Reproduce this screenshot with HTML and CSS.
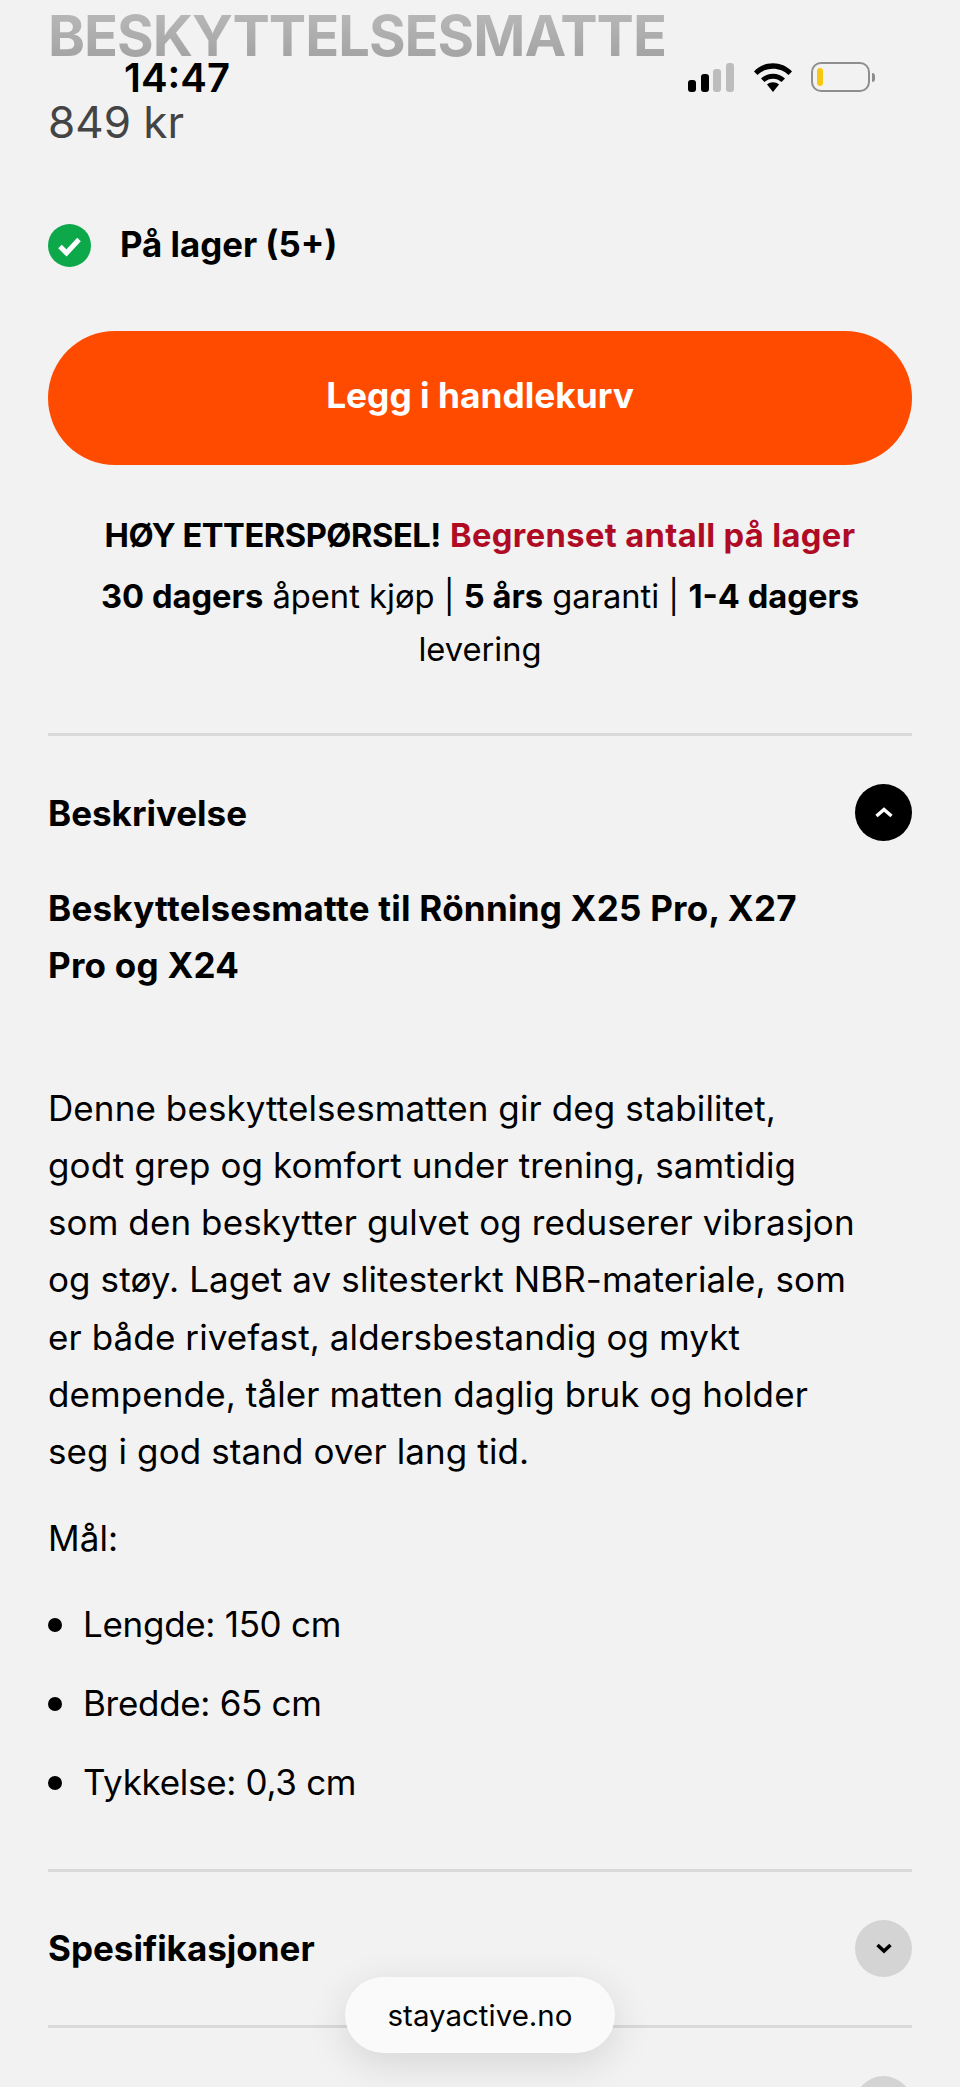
FILE: index.html
```html
<!DOCTYPE html>
<html lang="nb">
  <head>
    <meta charset="UTF-8" />
    <meta name="viewport" content="width=device-width, initial-scale=1.0" />
    <title>Beskyttelsesmatte</title>
    <link rel="stylesheet" href="styles.css">
  </head>
  <body>
    <div class="status-bar">
      <span class="time">14:47</span>
      <div class="status-icons">
        <svg class="signal" width="46" height="29" viewBox="0 0 46 29">
          <rect x="0" y="17" width="8" height="12" rx="3" fill="#000"/>
          <rect x="13" y="11" width="8" height="18" rx="3" fill="#000"/>
          <rect x="25" y="6" width="8" height="23" rx="3" fill="#bdbdbd"/>
          <rect x="38" y="0" width="8" height="29" rx="3" fill="#bdbdbd"/>
        </svg>
        <svg class="wifi" width="40" height="30" viewBox="0 0 40 30">
          <path d="M1 9.500C11 -1.500 29 -1.500 39 9.500L35.500 13C27.500 4.500 12.500 4.500 4.500 13Z" fill="#000"/>
          <path d="M8 16.500C14.500 10 25.500 10 32 16.500L28.500 20C24 15.500 16 15.500 11.500 20Z" fill="#000"/>
          <path d="M14 22.500C17.500 19.500 22.500 19.500 26 22.500L20 30Z" fill="#000"/>
        </svg>
        <div class="battery">
          <div class="battery-body"><div class="battery-level"></div></div>
          <div class="battery-nub"></div>
        </div>
      </div>
    </div>

    <main class="product">
      <h1 class="title">BESKYTTELSESMATTE</h1>
      <div class="price">849 kr</div>

      <div class="stock">
        <svg width="43" height="43" viewBox="0 0 43 43">
          <circle cx="21.500" cy="21.500" r="21.500" fill="#0ca84a"/>
          <path d="M12 22.500L18.500 29L31 15.500" fill="none" stroke="#fff" stroke-width="5"/>
        </svg>
        <span>På lager (5+)</span>
      </div>

      <button class="add-to-cart">Legg i handlekurv</button>

      <div class="info">
        <p class="demand"><b class="high">HØY ETTERSPØRSEL!</b> <b class="limited">Begrenset antall på lager</b></p>
        <p class="terms"><b>30 dagers</b> åpent kjøp | <b>5 års</b> garanti | <b>1-4 dagers</b> levering</p>
      </div>

      <section class="accordion open">
        <div class="accordion-head">
          <h2>Beskrivelse</h2>
          <span class="toggle dark">
            <svg width="18" height="11" viewBox="0 0 18 11"><path d="M1.500 9L9 2.500L16.500 9" fill="none" stroke="#fff" stroke-width="3.500"/></svg>
          </span>
        </div>
        <div class="accordion-body">
          <h3>Beskyttelsesmatte til Rönning X25 Pro, X27<br>Pro og X24</h3>
          <p class="text">Denne beskyttelsesmatten gir deg stabilitet,<br>godt grep og komfort under trening, samtidig<br>som den beskytter gulvet og reduserer vibrasjon<br>og støy. Laget av slitesterkt NBR-materiale, som<br>er både rivefast, aldersbestandig og mykt<br>dempende, tåler matten daglig bruk og holder<br>seg i god stand over lang tid.</p>
          <p class="measure">Mål:</p>
          <ul>
            <li>Lengde: 150 cm</li>
            <li>Bredde: 65 cm</li>
            <li>Tykkelse: 0,3 cm</li>
          </ul>
        </div>
      </section>

      <section class="accordion">
        <div class="accordion-head">
          <h2>Spesifikasjoner</h2>
          <span class="toggle">
            <svg width="18" height="11" viewBox="0 0 18 11"><path d="M2.500 2L9 8L15.500 2" fill="none" stroke="#000" stroke-width="3.500"/></svg>
          </span>
        </div>
      </section>

      <section class="accordion">
        <div class="accordion-head">
          <h2></h2>
          <span class="toggle"></span>
        </div>
      </section>
    </main>

    <div class="url-pill">stayactive.no</div>
  </body>
</html>
```

FILE: styles.css
```css
html,
body {
  margin: 0;
  height: 2087px;
  overflow: hidden;
}

body {
  position: relative;
  background: #f2f2f2;
  color: #000;
  font-family: Inter, "Liberation Sans", sans-serif;
}

p,
h1,
h2,
h3,
ul {
  margin: 0;
  padding: 0;
}

.status-bar {
  position: absolute;
  top: 0;
  left: 0;
  width: 960px;
  height: 100px;
}

.time {
  position: absolute;
  left: 124px;
  top: 56px;
  font-size: 40px;
  line-height: 44px;
  font-weight: 600;
}

.status-icons {
  position: absolute;
  left: 688px;
  top: 62px;
  display: flex;
  align-items: flex-start;
}

.signal {
  margin-top: 1px;
}

.wifi {
  margin-left: 19px;
}

.battery {
  margin-left: 18px;
  display: flex;
  align-items: center;
}

.battery-body {
  box-sizing: border-box;
  width: 59px;
  height: 30px;
  border: 2.500px solid #8e8e8e;
  border-radius: 10px;
  padding: 3.500px;
}

.battery-level {
  width: 6px;
  height: 18px;
  background: #f8c811;
  border-radius: 3px;
}

.battery-nub {
  width: 3px;
  height: 9px;
  margin-left: 2px;
  background: #8e8e8e;
  border-radius: 0 3px 3px 0;
}

.product {
  padding: 0 48px;
}

.title {
  padding-top: 6px;
  font-size: 56px;
  line-height: 60px;
  font-weight: 700;
  letter-spacing: -1px;
  background: linear-gradient(#bdbdbd, #a0a0a0);
  -webkit-background-clip: text;
  background-clip: text;
  color: transparent;
}

.price {
  margin-top: 30px;
  font-size: 44px;
  line-height: 52px;
  color: #444;
}

.stock {
  height: 43px;
  margin-top: 76px;
  display: flex;
  align-items: center;
  gap: 29px;
  font-size: 34.800px;
  font-weight: 700;
}

.stock span {
  margin-top: -3px;
}

.add-to-cart {
  display: block;
  width: 100%;
  height: 134px;
  margin-top: 64px;
  padding: 0 0 6px;
  border: none;
  border-radius: 67px;
  background: #ff4b00;
  color: #fff;
  font-family: inherit;
  font-size: 35.300px;
  font-weight: 700;
}

.info {
  margin-top: 43px;
  text-align: center;
  font-size: 32.700px;
}

.info b {
  font-weight: 700;
}

.demand {
  line-height: 54px;
}

.high {
  letter-spacing: -0.500px;
}

.limited {
  color: #b00b24;
  letter-spacing: 0.360px;
}

.terms {
  margin-top: 8px;
  line-height: 53px;
}

.accordion {
  border-top: 3px solid #d9d9d9;
}

.info + .accordion {
  margin-top: 57px;
}

.accordion-head {
  display: flex;
  justify-content: space-between;
  align-items: center;
  padding: 48px 0;
}

.accordion-head h2 {
  font-size: 35px;
  font-weight: 700;
}

.toggle {
  display: flex;
  justify-content: center;
  align-items: center;
  width: 57px;
  height: 57px;
  border-radius: 50%;
  background: #d4d4d4;
}

.toggle.dark {
  background: #000;
}

.accordion-body {
  margin-top: -9px;
  padding-bottom: 36px;
  font-size: 35px;
  letter-spacing: 0.100px;
  line-height: 57.300px;
}

.accordion-body h3 {
  font-size: 35px;
  font-weight: 700;
  letter-spacing: 0.250px;
}

.text {
  margin-top: 85px;
}

.measure {
  margin-top: 29px;
}

.accordion-body ul {
  margin-top: 29px;
  list-style: none;
  letter-spacing: -0.300px;
}

.accordion-body li {
  display: flex;
  align-items: center;
  gap: 21px;
  margin-bottom: 21.700px;
}

.accordion-body li::before {
  content: "";
  width: 14px;
  height: 14px;
  border-radius: 50%;
  background: #000;
}

.url-pill {
  position: absolute;
  left: 345px;
  top: 1977px;
  width: 270px;
  height: 76px;
  display: flex;
  justify-content: center;
  align-items: center;
  background: #fafafa;
  border-radius: 38px;
  box-shadow: 0 10px 40px rgba(0, 0, 0, 0.12);
  font-size: 29.500px;
}
```
